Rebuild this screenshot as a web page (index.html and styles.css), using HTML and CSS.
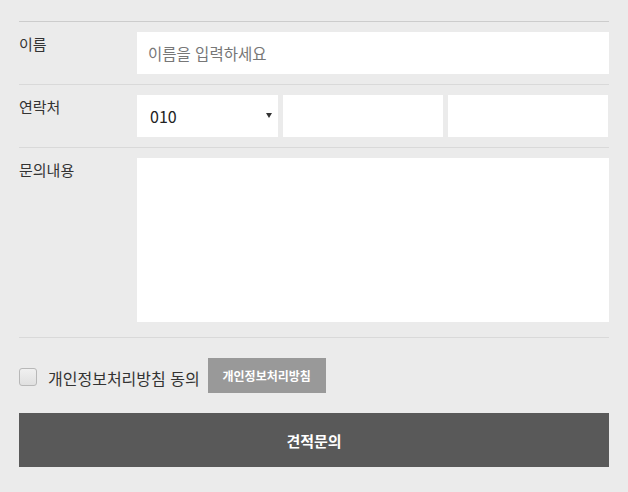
FILE: index.html
```html
<!DOCTYPE html>
<html lang="ko">
<head>
<meta charset="utf-8">
<link rel="stylesheet" href="styles.css">
</head>
<body>
<form class="form">
  <div class="row first">
    <label class="lbl">이름</label>
    <div class="field"><input class="inp full" type="text" placeholder="이름을 입력하세요"></div>
  </div>
  <div class="row">
    <label class="lbl">연락처</label>
    <div class="field phone">
      <div class="sel-wrap"><select class="sel"><option>010</option></select></div>
      <input class="inp ph" type="text">
      <input class="inp ph" type="text">
    </div>
  </div>
  <div class="row last">
    <label class="lbl">문의내용</label>
    <div class="field"><textarea class="ta"></textarea></div>
  </div>
  <div class="agree">
    <span class="cb"></span>
    <span class="agree-text">개인정보처리방침 동의</span>
    <button type="button" class="policy">개인정보처리방침</button>
  </div>
  <button type="button" class="submit">견적문의</button>
</form>
</body>
</html>
```
FILE: styles.css
```css
html, body {
  margin: 0;
  padding: 0;
  background: #ebebeb;
}
body {
  font-family: "Noto Sans CJK KR", "Noto Sans", sans-serif;
  color: #333;
}
.form {
  width: 590px;
  margin: 0 0 0 19px;
  padding-top: 21px;
}
.row {
  display: flex;
  border-top: 1px solid #d9d9d9;
  padding: 10px 0;
}
.row.first {
  border-top-color: #cccccc;
}
.row.last {
  border-bottom: 1px solid #d9d9d9;
  padding-bottom: 15px;
}
.lbl {
  width: 118px;
  font-size: 15px;
  line-height: 22px;
  color: #333;
  padding-top: 1px;
}
.field {
  flex: 1;
  display: flex;
}
.phone {
  gap: 5px;
}
.inp, .sel, .ta {
  border: none;
  outline: none;
  background: #fff;
  margin: 0;
  font-family: "Noto Sans CJK KR", "Noto Sans", sans-serif;
  box-sizing: border-box;
}
.inp {
  height: 42px;
  padding: 0 11px;
  font-size: 15.5px;
  color: #333;
}
.inp.full {
  width: 472px;
}
.inp::placeholder {
  color: #777;
}
.inp.ph {
  width: 160px;
}
.sel-wrap {
  position: relative;
  width: 141px;
  height: 42px;
}
.sel-wrap::after {
  content: "";
  position: absolute;
  right: 6px;
  top: 18px;
  border-left: 3px solid transparent;
  border-right: 3px solid transparent;
  border-top: 5px solid #333;
  pointer-events: none;
}
.sel {
  -webkit-appearance: none;
  appearance: none;
  width: 141px;
  height: 42px;
  padding: 0 13px;
  font-size: 16px;
  color: #222;
  border-radius: 0;
}
.ta {
  width: 472px;
  height: 164px;
  resize: none;
  display: block;
}
.agree {
  display: flex;
  align-items: center;
  margin-top: 20px;
  height: 35px;
}
.cb {
  width: 16px;
  height: 16px;
  border: 1px solid #b8b8b8;
  border-radius: 3px;
  background: linear-gradient(#f0f0f0, #e0e0e0);
  margin-top: 3px;
}
.agree-text {
  font-size: 16px;
  color: #333;
  margin-left: 11px;
  margin-top: 4px;
}
.policy {
  margin-left: 8px;
  width: 118px;
  height: 35px;
  border: none;
  background: #999;
  color: #fff;
  font-family: "Noto Sans CJK KR", "Noto Sans", sans-serif;
  font-size: 12px;
  font-weight: bold;
  padding: 0;
}
.submit {
  display: block;
  margin-top: 20px;
  width: 590px;
  height: 54px;
  border: none;
  background: #595959;
  color: #fff;
  font-family: "Noto Sans CJK KR", "Noto Sans", sans-serif;
  font-size: 15px;
  font-weight: bold;
  padding: 0;
}
```
